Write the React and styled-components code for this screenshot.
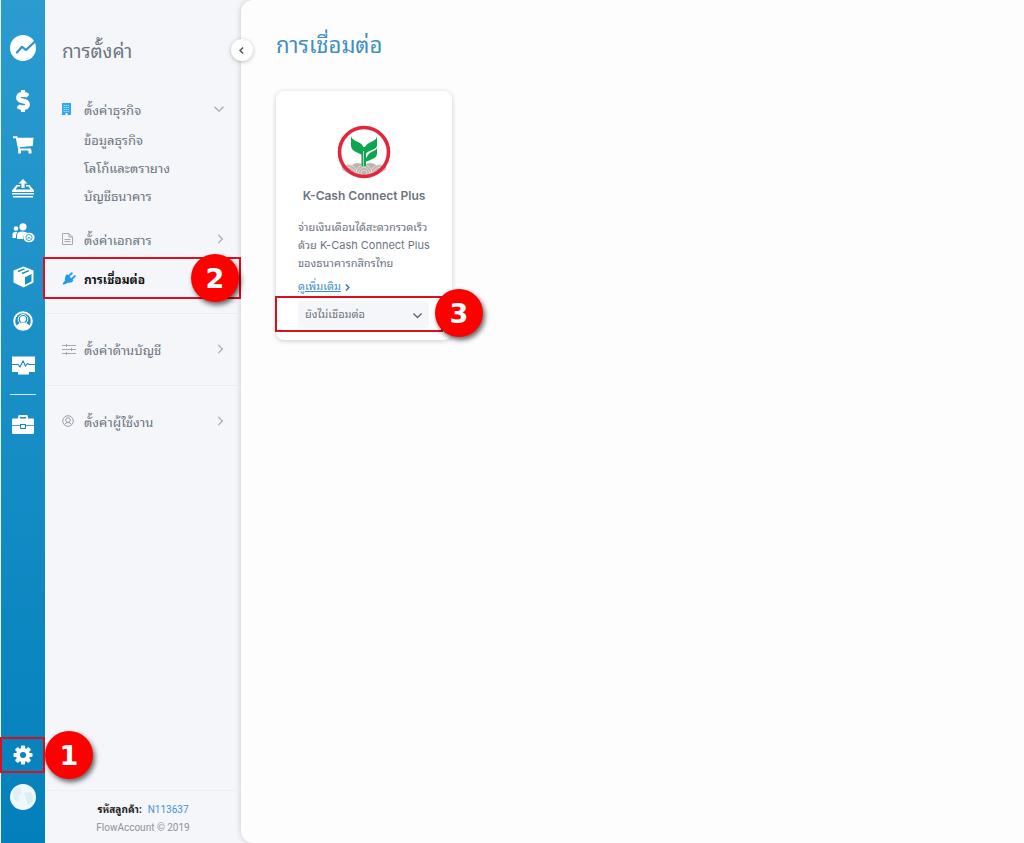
import React from 'react'
import styled, { createGlobalStyle, css } from 'styled-components'
import { FaDollarSign } from 'react-icons/fa'

const GlobalStyle = createGlobalStyle`
  * {
    box-sizing: border-box;
  }
  body {
    margin: 0;
    background: #f5f6fa;
    color: #6b7480;
    font-family: Roboto, 'Noto Sans Thai Looped', 'Noto Sans Thai', Loma, sans-serif;
    font-size: 13px;
  }
  button, select {
    font: inherit;
    color: inherit;
  }
`

const LogoIcon = () => (
  <svg width="26" height="26" viewBox="0 0 26 26">
    <circle cx="13" cy="13" r="13" fill="#fff" />
    <path d="M7 17.500 L12 11.800 L16 15 L25 6.500" fill="none" stroke="#2696cc" strokeWidth="2.200" strokeLinejoin="round" strokeLinecap="round" />
  </svg>
)

const CartIcon = () => (
  <svg width="21" height="18" viewBox="0 0 21 18">
    <path d="M0 1.200 H3.600 L6.200 13.500 H18" fill="none" stroke="#fff" strokeWidth="1.900" />
    <path d="M4.200 1.800 H20.500 L19.800 10 L6 11.300 Z" fill="#fff" />
    <path d="M5.200 14 H8 V17.500 H5.200 Z M15.500 14 H18.500 V17.500 H15.500 Z" fill="#fff" />
  </svg>
)

const ExpenseIcon = () => (
  <svg width="22" height="20" viewBox="0 0 22 20" fill="#fff">
    <path d="M11 0 L15.500 4.500 H12.600 V9 H9.400 V4.500 H6.500 Z" />
    <path d="M4.500 6 H8 V7.500 H5.500 L3.500 10.500 H18.500 L16.500 7.500 H14 V6 H17.500 L22 11.500 V13 H0 V11.500 Z" />
    <path d="M0 14 H22 V15.500 H0 Z M1 17 H21 V18.500 H1 Z" />
  </svg>
)

const PeopleIcon = () => (
  <svg width="23" height="20" viewBox="0 0 23 20" fill="#fff">
    <circle cx="4" cy="5.500" r="2.300" />
    <circle cx="11" cy="3.800" r="3.600" />
    <path d="M0.500 15 V11.500 Q0.500 8.800 4 8.800 Q5 8.800 5.500 9.300 Q4 10.800 4 13 V15 Z" />
    <path d="M5 16 V12.500 Q5 8.500 10.500 8.500 Q14 8.500 15.500 10 Q11 11 11 16 Z" />
    <ellipse cx="17" cy="14.500" rx="5.600" ry="4.800" />
    <circle cx="17" cy="14.500" r="3.100" fill="none" stroke="#1f90c7" strokeWidth="0.800" />
    <path d="M15.500 15.800 Q17 13 18.500 15.800" fill="none" stroke="#1f90c7" />
  </svg>
)

const BoxIcon = () => (
  <svg width="21" height="22" viewBox="0 0 20 22">
    <path d="M10 0.500 L20 4.500 V16.500 L10 21.500 L0 16.500 V4.500 Z" fill="#fff" />
    <path d="M11.500 11.200 L18 8 V15.500 L11.500 18.800 Z" fill="#1b8dc5" />
    <path d="M4.500 5.500 L11 2.800 M8.500 7.500 L15.500 4.700" fill="none" stroke="#1b8dc5" strokeWidth="1.400" />
  </svg>
)

const ContactIcon = () => (
  <svg width="20" height="20" viewBox="0 0 20 20">
    <circle cx="10" cy="10" r="8.800" fill="none" stroke="#fff" strokeWidth="2" />
    <circle cx="10" cy="8.300" r="4.800" fill="none" stroke="#fff" strokeWidth="1" />
    <circle cx="10" cy="8" r="3.100" fill="#fff" />
    <path d="M3 15 Q5 12.500 8 11.500 H12 Q15 12.500 17 15 Q14 19 10 19 Q6 19 3 15 Z" fill="#fff" />
  </svg>
)

const MonitorIcon = () => (
  <svg width="23" height="19" viewBox="0 0 23 19">
    <path d="M0 0.500 H23 V16 H17 V18.500 H6 V16 H0 Z" fill="#fff" />
    <path d="M0 8.500 H6 L8 11 L11 5 L13.500 10 L15.500 7.500 L17 8.500 H23" fill="none" stroke="#1588c2" strokeWidth="1.200" />
  </svg>
)

const BriefcaseIcon = () => (
  <svg width="22" height="19" viewBox="0 0 22 19">
    <path d="M7 4 V1.500 Q7 1 7.500 1 H14.500 Q15 1 15 1.500 V4" fill="none" stroke="#fff" strokeWidth="1.800" />
    <rect y="3.500" width="22" height="15.500" rx="1.200" fill="#fff" />
    <path d="M0 10.500 H22" stroke="#1386c0" strokeWidth="0.800" />
    <rect x="8.500" y="9.500" width="5" height="4" fill="#fff" stroke="#1386c0" />
  </svg>
)

const GearIcon = () => (
  <svg width="20" height="20" viewBox="-10 -10 20 20">
    {[0, 45, 90, 135].map(angle => (
      <rect key={angle} x="-2.100" y="-9.500" width="4.200" height="19" rx="1" fill="#fff" transform={`rotate(${angle})`} />
    ))}
    <circle r="7" fill="#fff" />
    <circle r="3" fill="#0783bd" />
  </svg>
)

const GlobeAvatar = () => (
  <svg width="26" height="26" viewBox="0 0 26 26">
    <circle cx="13" cy="13" r="13" fill="#eff8fb" />
    <path d="M3 6 Q8 2 11 4 L12 9 L8 13 L9 18 Q5 17 3 13 Z" fill="#e0f0f6" />
    <path d="M14 9 L21 8 Q24 12 23 17 L18 21 L16 15 Z" fill="#dceef5" />
  </svg>
)

const BuildingIcon = () => (
  <svg width="9" height="12" viewBox="0 0 9 12">
    <rect width="9" height="12" fill="#2fa8f4" />
    <path d="M1.500 2.500 H7.500 M1.500 4.500 H7.500 M1.500 6.500 H7.500 M1.500 8.500 H7.500" stroke="#a9daf9" strokeDasharray="1.400 0.600" />
    <rect x="3.500" y="10" width="2" height="2" fill="#fff" />
  </svg>
)

const DocumentIcon = () => (
  <svg width="11" height="12" viewBox="0 0 11 12" fill="none" stroke="#a3a9b2">
    <path d="M0.500 0.500 H7 L10.500 4 V11.500 H0.500 Z M7 0.500 V4 H10.500 M2.500 6.500 H8.500 M2.500 8.500 H8.500" />
  </svg>
)

const PlugIcon = () => (
  <svg width="14" height="13" viewBox="0 0 14 13">
    <path d="M5 2 L11.500 8.500 Q9.500 11.500 6 10.700 Q3 12.800 0.800 12.400 Q0.500 11 3 8.500 Q2.500 4.500 5 2 Z" fill="#2299f2" />
    <path d="M6.800 4.200 L9.800 1.200 M9.800 7.200 L12.800 4.200" fill="none" stroke="#2299f2" strokeWidth="1.900" strokeLinecap="round" />
  </svg>
)

const SlidersIcon = () => (
  <svg width="14" height="11" viewBox="0 0 14 11" stroke="#a3a9b2">
    <path d="M0 1.500 H14 M0 5.500 H14 M0 9.500 H14 M4.500 0 V3 M9.500 4 V7 M4.500 8 V11" />
  </svg>
)

const UserIcon = () => (
  <svg width="12" height="12" viewBox="0 0 12 12" fill="none" stroke="#9aa1ab">
    <circle cx="6" cy="6" r="5.300" />
    <circle cx="6" cy="5" r="2.300" />
    <path d="M2.500 9.500 Q3.500 7.500 6 7.500 Q8.500 7.500 9.500 9.500" />
  </svg>
)

const Chevron = ({ down, size = 10, color = '#a3a9b2', weight = 1.2 }) => (
  <svg width={size} height={size} viewBox="0 0 10 10" fill="none" stroke={color} strokeWidth={weight}>
    <path d={down ? 'M0.500 2.800 L5 7.200 L9.500 2.800' : 'M4.200 0.800 L8.400 5 L4.200 9.200'} />
  </svg>
)

const BankLogo = () => (
  <svg width="54" height="54" viewBox="0 0 54 54">
    <clipPath id="soil">
      <path d="M3 43 Q10 38 15 40 Q20 36 27 40 Q34 36 39 40 Q45 38 51 43 Q42 51 27 51 Q12 51 3 43 Z" />
    </clipPath>
    <circle cx="27" cy="27" r="24.500" fill="#fff" />
    <g clipPath="url(#soil)">
      <rect x="5" y="34" width="44" height="18" fill="#bdb5ae" />
      <g fill="none" stroke="#e9e6e3" strokeWidth="0.700">
        {[12, 27, 42].map(x => (
          <g key={x}>
            <circle cx={x} cy="48" r="3" />
            <circle cx={x} cy="48" r="5.500" />
            <circle cx={x} cy="48" r="8" />
          </g>
        ))}
      </g>
    </g>
    <path d="M14 11 Q15 14.500 20 16.500 Q25.500 18.500 26.500 22.500 V30.500 Q22 28.500 18 26.500 Q14.500 24.500 14 21 Z" fill="#0da64f" />
    <path d="M40 11 Q39.500 14.500 35 16.500 Q28 19 27.500 24 V30 Q31 26 36 24.500 Q40 23 40 20 Z" fill="#0da64f" />
    <path d="M40 23 Q39 25 35.500 26.500 Q29.500 29 28 37 Q33 35 36.500 33.500 Q40 32 40 28 Z" fill="#0da64f" />
    <path d="M24.500 22 H29 V41 H24.500 Z" fill="#0da64f" />
    <path d="M26.500 26 V41" fill="none" stroke="#a6dbb8" strokeWidth="1" />
    <circle cx="27" cy="27" r="24.500" fill="none" stroke="#e3263b" strokeWidth="3.600" />
  </svg>
)

const railItems = [
  ['รายรับ', <FaDollarSign size={22} stroke="#fff" strokeWidth={32} />],
  ['สินค้า', <CartIcon />],
  ['ค่าใช้จ่าย', <ExpenseIcon />],
  ['พนักงาน', <PeopleIcon />],
  ['คลังสินค้า', <BoxIcon />],
  ['ผู้ติดต่อ', <ContactIcon />],
  ['รายงาน', <MonitorIcon />],
]

const App = () => (
  <Page>
    <GlobalStyle />
    <Rail>
      <LogoButton aria-label="FlowAccount"><LogoIcon /></LogoButton>
      {railItems.map(([label, icon]) => (
        <RailButton key={label} aria-label={label}>{icon}</RailButton>
      ))}
      <RailDivider />
      <RailButton aria-label="บัญชี"><BriefcaseIcon /></RailButton>
      <RailBottom>
        <SettingsSpot>
          <SettingsButton aria-label="การตั้งค่า"><GearIcon /></SettingsButton>
          <Step $place="right">1</Step>
        </SettingsSpot>
        <RailButton aria-label="โปรไฟล์"><GlobeAvatar /></RailButton>
      </RailBottom>
    </Rail>

    <Sidebar>
      <CollapseButton aria-label="ย่อเมนู">
        <Flip><Chevron size={7} color="#4d5663" weight={2.2} /></Flip>
      </CollapseButton>
      <SidebarTitle>การตั้งค่า</SidebarTitle>
      <Menu>
        <MenuItem href="#business">
          <MenuIcon><BuildingIcon /></MenuIcon>
          <MenuLabel>ตั้งค่าธุรกิจ</MenuLabel>
          <Chevron down />
        </MenuItem>
        <SubMenu>
          <SubItem href="#info">ข้อมูลธุรกิจ</SubItem>
          <SubItem href="#logo">โลโก้และตรายาง</SubItem>
          <SubItem href="#bank">บัญชีธนาคาร</SubItem>
        </SubMenu>
        <MenuItem href="#document">
          <MenuIcon><DocumentIcon /></MenuIcon>
          <MenuLabel>ตั้งค่าเอกสาร</MenuLabel>
          <Chevron />
        </MenuItem>
        <ActiveSpot>
          <MenuItem href="#connect" $active>
            <MenuIcon><PlugIcon /></MenuIcon>
            <MenuLabel>การเชื่อมต่อ</MenuLabel>
          </MenuItem>
          <Step $place="inside">2</Step>
        </ActiveSpot>
        <MenuSection>
          <MenuItem href="#accounting">
            <MenuIcon><SlidersIcon /></MenuIcon>
            <MenuLabel>ตั้งค่าด้านบัญชี</MenuLabel>
            <Chevron />
          </MenuItem>
        </MenuSection>
        <MenuSection>
          <MenuItem href="#users">
            <MenuIcon><UserIcon /></MenuIcon>
            <MenuLabel>ตั้งค่าผู้ใช้งาน</MenuLabel>
            <Chevron />
          </MenuItem>
        </MenuSection>
      </Menu>
      <SidebarFooter>
        <CustomerId><b>รหัสลูกค้า:</b><a href="#customer">N113637</a></CustomerId>
        <Copyright>FlowAccount © 2019</Copyright>
      </SidebarFooter>
    </Sidebar>

    <Main>
      <Title>การเชื่อมต่อ</Title>
      <Card>
        <CardBody>
          <BankLogo />
          <CardTitle>K-Cash Connect Plus</CardTitle>
          <CardText>
            จ่ายเงินเดือนได้สะดวกรวดเร็ว<br />
            ด้วย K-Cash Connect Plus<br />
            ของธนาคารกสิกรไทย
          </CardText>
          <MoreLink href="#more">
            <u>ดูเพิ่มเติม</u>
            <Chevron size={7} color="#2d7fb8" weight={2.2} />
          </MoreLink>
        </CardBody>
        <StatusSpot>
          <SelectWrap>
            <Select aria-label="สถานะการเชื่อมต่อ" defaultValue="off">
              <option value="off">ยังไม่เชื่อมต่อ</option>
            </Select>
            <SelectArrow><Chevron down size={9} color="#5b6470" weight={1.5} /></SelectArrow>
          </SelectWrap>
          <Step $place="edge">3</Step>
        </StatusSpot>
      </Card>
    </Main>
  </Page>
)

export default App

const Page = styled.div`
  display: flex;
  min-height: 100vh;
`

const Rail = styled.nav`
  display: flex;
  flex-direction: column;
  align-items: center;
  flex: 0 0 45px;
  padding-top: 26px;
  border-left: 1px solid #e9f3f8;
  background: linear-gradient(#2b9bd0, #0380bb);
  color: #fff;
`

const RailButton = styled.button`
  display: flex;
  align-items: center;
  justify-content: center;
  width: 44px;
  height: 44px;
  padding: 0;
  border: 0;
  background: none;
  cursor: pointer;
`

const LogoButton = styled(RailButton)`
  margin-bottom: 9px;
`

const RailDivider = styled.div`
  width: 26px;
  height: 1px;
  margin: 7px 0;
  background: #d6ebf5;
`

const RailBottom = styled.div`
  margin-top: auto;
  padding-bottom: 24px;
`

const markBox = css`
  position: relative;
  border: 2px solid #d9101f;
`

const SettingsSpot = styled.div`
  ${markBox}
  width: 45px;
  margin-left: -1px;
  margin-bottom: 2px;
`

const SettingsButton = styled(RailButton)`
  width: 100%;
  height: 32px;
`

const stepPlaces = {
  right: 'left: 43px; top: -8px;',
  inside: 'right: 0; top: -5px;',
  edge: 'right: -42px; top: -9px;',
}

const Step = styled.span`
  position: absolute;
  z-index: 3;
  ${p => stepPlaces[p.$place]}
  display: flex;
  align-items: center;
  justify-content: center;
  width: 48px;
  height: 48px;
  border-radius: 50%;
  background: #fe0000;
  box-shadow: 2px 3px 5px rgba(0, 0, 0, 0.6);
  color: #fff;
  font-family: 'DejaVu Sans', sans-serif;
  font-size: 27px;
  font-weight: 700;
  line-height: 1;
`

const Sidebar = styled.aside`
  position: relative;
  display: flex;
  flex-direction: column;
  flex: 0 0 196px;
`

const SidebarTitle = styled.h2`
  margin: 0;
  padding: 36px 17px 0;
  font-size: 19px;
  font-weight: 400;
  line-height: 32px;
`

const CollapseButton = styled.button`
  position: absolute;
  z-index: 2;
  top: 39px;
  right: -12px;
  display: flex;
  align-items: center;
  justify-content: center;
  width: 22px;
  height: 22px;
  padding: 0;
  border: 0;
  border-radius: 50%;
  background: #fff;
  box-shadow: 0 1px 4px rgba(0, 0, 0, 0.25);
`

const Flip = styled.span`
  display: flex;
  transform: rotate(180deg);
`

const Menu = styled.nav`
  display: flex;
  flex-direction: column;
  padding-top: 23px;
`

const MenuItem = styled.a`
  display: flex;
  align-items: center;
  height: 36px;
  padding: 0 17px;
  color: ${p => (p.$active ? '#111' : 'inherit')};
  font-size: ${p => (p.$active ? 12 : 13)}px;
  font-weight: ${p => (p.$active ? 700 : 400)};
  text-decoration: none;
`

const MenuIcon = styled.span`
  display: flex;
  flex: 0 0 22px;
`

const MenuLabel = styled.span`
  flex: 1;
`

const SubMenu = styled.div`
  display: flex;
  flex-direction: column;
  padding: 0 0 10px 39px;
`

const SubItem = styled.a`
  color: inherit;
  line-height: 28px;
  text-decoration: none;
`

const ActiveSpot = styled.div`
  ${markBox}
  margin-left: -2px;
  margin-bottom: 14px;
  padding: 1px 0;
`

const MenuSection = styled.div`
  padding: 17px 0 18px;
  border-top: 1px solid #e9ebf0;
`

const SidebarFooter = styled.footer`
  margin-top: auto;
  padding: 10px 0 6px;
  border-top: 1px solid #eceef2;
  text-align: center;
  line-height: 18px;
`

const CustomerId = styled.div`
  display: flex;
  justify-content: center;
  gap: 6px;
  font-size: 10px;

  b {
    color: #222;
  }
  a {
    color: #4594cc;
    text-decoration: none;
  }
`

const Copyright = styled.div`
  color: #8d939c;
  font-size: 10px;
`

const Main = styled.main`
  flex: 1;
  padding: 28px 35px;
  border-radius: 12px 0 0 12px;
  background: #fdfdfd;
  box-shadow: 0 0 6px rgba(0, 0, 0, 0.18);
`

const Title = styled.h1`
  margin: 0 0 27px;
  color: #3d8fc4;
  font-size: 22px;
  font-weight: 400;
  line-height: 36px;
`

const Card = styled.section`
  width: 176px;
  padding-bottom: 8px;
  border-radius: 8px;
  background: #fff;
  box-shadow: 0 1px 5px rgba(0, 0, 0, 0.2);
`

const CardBody = styled.div`
  display: flex;
  flex-direction: column;
  align-items: center;
  padding: 34px 22px 0;
`

const CardTitle = styled.h3`
  margin: 6px 0 11px;
  font-family: Inter, Roboto, sans-serif;
  font-size: 12px;
  font-weight: 600;
  line-height: 22px;
  white-space: nowrap;
`

const CardText = styled.p`
  align-self: flex-start;
  margin: 0;
  font-family: Inter, 'Noto Sans Thai Looped', 'Noto Sans Thai', Loma, sans-serif;
  font-size: 11px;
  line-height: 18px;
  white-space: nowrap;
`

const MoreLink = styled.a`
  display: flex;
  align-items: center;
  align-self: flex-start;
  gap: 2px;
  margin-top: 6px;
  color: #3d8fc4;
  font-size: 11px;
  line-height: 18px;
  text-decoration: none;
`

const StatusSpot = styled.div`
  ${markBox}
  width: 168px;
  height: 36px;
  padding: 3px 0 0 21px;
  margin-left: -1px;
`

const SelectWrap = styled.div`
  position: relative;
  width: 131px;
`

const Select = styled.select`
  appearance: none;
  width: 100%;
  height: 27px;
  padding: 0 24px 0 7px;
  border: 0;
  border-radius: 4px;
  background: #f5f6fa;
  font-size: 11px;
`

const SelectArrow = styled.span`
  position: absolute;
  top: 10px;
  right: 7px;
  display: flex;
  pointer-events: none;
`
